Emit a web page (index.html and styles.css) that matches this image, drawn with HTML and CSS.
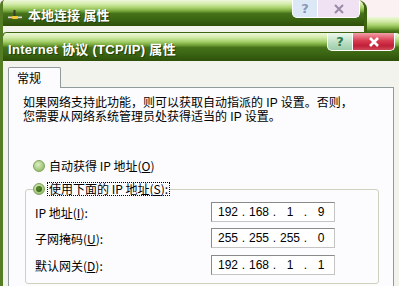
FILE: index.html
```html
<!DOCTYPE html>
<html lang="zh-CN">
<head>
  <meta charset="UTF-8" />
  <title>Internet 协议 (TCP/IP) 属性</title>
  <link rel="stylesheet" href="styles.css">
</head>
<body>
  <div class="desktop">
    <!-- window far behind, only its title bar shows -->
    <div class="win win-far">
      <div class="titlebar"></div>
    </div>

    <!-- 本地连接 属性 (inactive) -->
    <div class="win win-back">
      <div class="titlebar">
        <svg class="title-icon" width="14" height="12" viewBox="0 0 14 12">
          <path d="M0 8.5h14" stroke="#d8d8c8" stroke-width="2" />
          <path d="M0 9.5h14" stroke="#6b6b50" stroke-width="1" />
          <path d="M6.5 1v7" stroke="#3a3a2a" stroke-width="2" />
          <rect x="4" y="7" width="6" height="3" rx="1" fill="#f2c830" />
        </svg>
        <span class="title-text">本地连接 属性</span>
        <div class="title-btns inactive">
          <span class="tbtn help">?</span>
          <span class="tbtn close">
            <svg width="12" height="10" viewBox="0 0 12 10"><path d="M2 1l8 8M10 1l-8 8" /></svg>
          </span>
        </div>
      </div>
      <div class="win-body"></div>
    </div>

    <!-- Internet 协议 (TCP/IP) 属性 (active) -->
    <div class="win win-front">
      <div class="titlebar">
        <span class="title-text">Internet 协议 (TCP/IP) 属性</span>
        <div class="title-btns">
          <span class="tbtn help">?</span>
          <span class="tbtn close">
            <svg width="12" height="10" viewBox="0 0 12 10"><path d="M2 1l8 8M10 1l-8 8" /></svg>
          </span>
        </div>
      </div>
      <div class="win-body">
        <div class="tabs">
          <span class="tab">常规</span>
        </div>
        <div class="panel">
          <p class="intro">如果网络支持此功能，则可以获取自动指派的 IP 设置。否则，<br>您需要从网络系统管理员处获得适当的 IP 设置。</p>

          <div class="radio-row">
            <span class="radio"></span>
            <span class="radio-label">自动获得 IP 地址(<u>O</u>)</span>
          </div>

          <fieldset class="group">
            <legend class="radio-row">
              <span class="radio checked"></span>
              <span class="radio-label focused">使用下面的 IP 地址(<u>S</u>):</span>
            </legend>

            <div class="field-row">
              <span class="field-label">IP 地址(<u>I</u>):</span>
              <div class="ip-box">
                <span class="oct">192</span><span class="dot">.</span><span class="oct">168</span><span class="dot">.</span><span class="oct">1</span><span class="dot">.</span><span class="oct">9</span>
              </div>
            </div>
            <div class="field-row">
              <span class="field-label">子网掩码(<u>U</u>):</span>
              <div class="ip-box">
                <span class="oct">255</span><span class="dot">.</span><span class="oct">255</span><span class="dot">.</span><span class="oct">255</span><span class="dot">.</span><span class="oct">0</span>
              </div>
            </div>
            <div class="field-row">
              <span class="field-label">默认网关(<u>D</u>):</span>
              <div class="ip-box">
                <span class="oct">192</span><span class="dot">.</span><span class="oct">168</span><span class="dot">.</span><span class="oct">1</span><span class="dot">.</span><span class="oct">1</span>
              </div>
            </div>
          </fieldset>
        </div>
      </div>
    </div>
  </div>
</body>
</html>
```

FILE: styles.css
```css
* {
  box-sizing: border-box;
  margin: 0;
  padding: 0;
}

body {
  font-family: "Noto Sans CJK SC", sans-serif;
  font-size: 12px;
  color: #000;
  background: #fbf0f2;
}

.desktop {
  position: relative;
  width: 399px;
  height: 286px;
  overflow: hidden;
  background: #fbf0f2;
}

/* windows sit on a free desktop */
.win {
  position: absolute;
}

.titlebar {
  display: flex;
  align-items: center;
  height: 27px;
  padding-top: 3px;
  background: linear-gradient(to bottom,
    #eef8da 0%, #d2eaa8 16%, #a8d26e 30%, #78a83c 42%,
    #46721a 52%, #3a6412 75%, #2e500a 100%);
  color: #fff;
  font-weight: bold;
  font-size: 13px;
}

.title-text {
  font-family: "Liberation Sans", "Noto Sans CJK SC", sans-serif;
  text-shadow: 1px 1px 0 #24400a;
  white-space: nowrap;
}

.win-front .title-text {
  letter-spacing: 0.3px;
}

.win-far {
  top: 17px;
  left: 360px;
  width: 60px;
}

.win-back {
  top: 0;
  left: 0;
  width: 367px;
  height: 40px;
  border-left: 3px solid #557e24;
  border-right: 3px solid #3e6412;
  border-radius: 5px 9px 0 0;
  overflow: hidden;
}

.win-back .titlebar {
  height: 26px;
  padding-left: 5px;
}

.win-back .win-body {
  height: 14px;
  background: #f4f4ec;
}

.title-icon {
  margin-right: 6px;
}

.title-btns {
  display: flex;
  align-self: flex-start;
  margin-left: auto;
  margin-top: -3px;
  margin-right: 4px;
}

.win-front .title-btns {
  margin-right: 7px;
}

.tbtn {
  display: flex;
  align-items: center;
  justify-content: center;
  height: 18px;
  border: 1px solid #fff;
  border-top: none;
  font-family: "DejaVu Sans", sans-serif;
  font-size: 13px;
  font-weight: bold;
}

.tbtn.help {
  width: 26px;
  border-radius: 0 0 0 5px;
  background: linear-gradient(to bottom, #eef8ee, #b8dcc0 60%, #9ccca8);
  color: #2f7a4a;
}

.tbtn.close {
  width: 42px;
  border-left: none;
  border-radius: 0 0 5px 0;
  background: linear-gradient(to bottom, #f2a0a8, #d83c50 45%, #c02038 75%, #d04858);
}

.tbtn svg path {
  stroke: #fff;
  stroke-width: 2.6;
  fill: none;
}

.inactive .tbtn.help {
  background: #dde8f6;
  color: #8a98b8;
}

.inactive .tbtn.close {
  background: #f0e2f2;
}

.inactive .tbtn svg path {
  stroke: #9a8aa8;
  stroke-width: 2;
}

.win-front {
  top: 32px;
  left: 0;
  width: 402px;
  height: 270px;
  border-top: 1px solid #3e6412;
  border-left: 3px solid #557e24;
  border-radius: 7px 7px 0 0;
  overflow: hidden;
  background: #f3f3ee;
}

.win-front .titlebar {
  height: 28px;
  padding-left: 5px;
}

.win-front .win-body {
  padding: 6px 0 0 5px;
}

.tabs {
  display: flex;
}

.tab {
  position: relative;
  z-index: 1;
  width: 53px;
  height: 21px;
  margin-bottom: -1px;
  padding: 3px 0 0 8px;
  border: 1px solid #919b9c;
  border-bottom: none;
  border-radius: 2px 2px 0 0;
  background: #fcfcfe;
  line-height: 14px;
}

.panel {
  width: 386px;
  height: 220px;
  padding: 8px 0 0 14px;
  border: 1px solid #919b9c;
  background: #fcfcfe;
}

.intro {
  font-family: "Liberation Sans", "Noto Sans CJK SC", sans-serif;
  line-height: 14px;
  white-space: nowrap;
}

.radio-row {
  display: flex;
  align-items: center;
  height: 14px;
}

.panel > .radio-row {
  margin: 35px 0 0 10px;
}

.radio {
  position: relative;
  width: 12px;
  height: 12px;
  border: 1px solid #7fa35a;
  border-radius: 50%;
  background: radial-gradient(circle at 40% 35%, #dcefc6, #a4c87c 60%, #8cb462);
}

.radio.checked::after {
  content: "";
  position: absolute;
  top: 2px;
  left: 2px;
  width: 6px;
  height: 6px;
  border-radius: 50%;
  background: radial-gradient(circle at 40% 40%, #5a8a2c, #2e5a0e);
}

.radio-label {
  margin-left: 4px;
  line-height: 12px;
}

.radio-label.focused {
  margin-left: 2px;
  padding: 0 1px;
  border: 1px dotted #000;
}

.group {
  width: 354px;
  margin: 9px 0 0 2px;
  padding: 0 7px 8px;
  border: 1px solid #d0d0bf;
  border-radius: 3px;
}

.group legend {
  padding: 0;
}

.field-row {
  display: flex;
  align-items: center;
  margin-top: 6px;
  padding-left: 2px;
}

.field-row:last-child {
  margin-top: 7px;
}

.field-label {
  width: 176px;
}

.ip-box {
  display: flex;
  align-items: center;
  width: 124px;
  height: 20px;
  padding-left: 4px;
  border: 1px solid #8a8a8a;
  border-right-color: #c4c4c4;
  border-bottom-color: #c4c4c4;
  background: #fff;
  font-family: "Liberation Sans", sans-serif;
  font-size: 12px;
}

.oct {
  width: 24px;
  text-align: center;
}

.dot {
  width: 7px;
  text-align: center;
}
```
